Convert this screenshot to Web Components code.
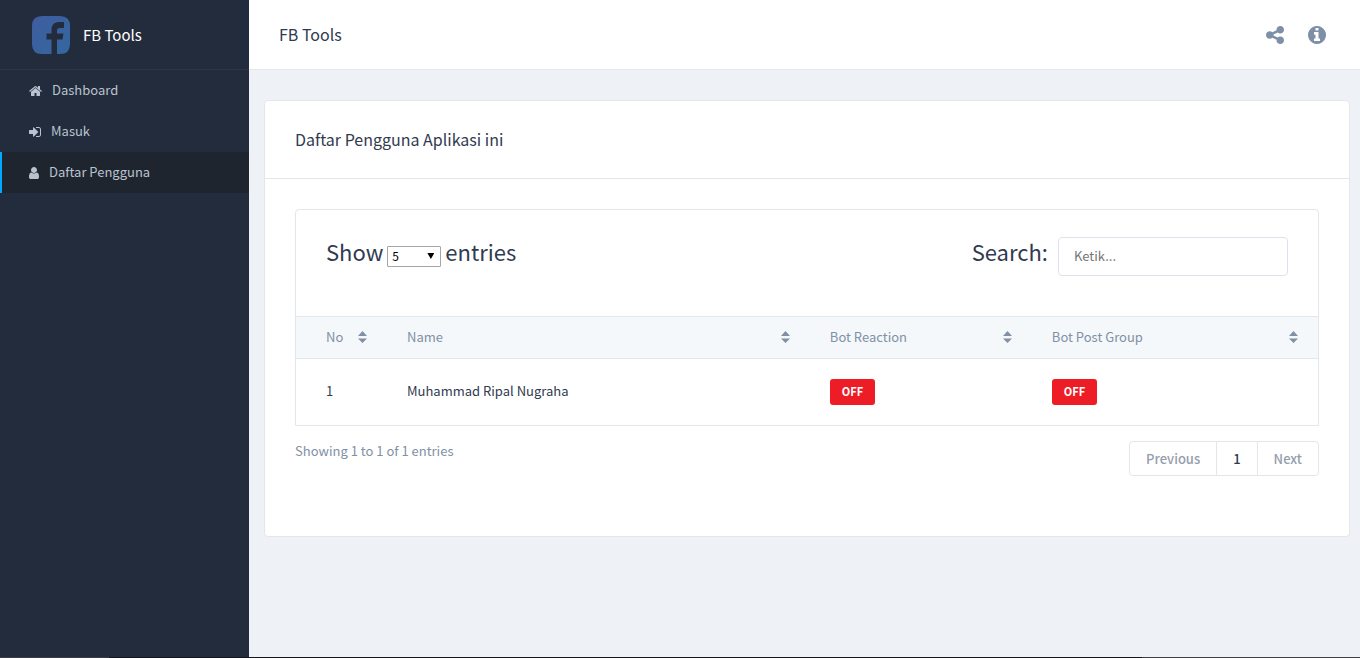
<!DOCTYPE html>
<html lang="id">
<head>
<meta charset="utf-8">
<title>FB Tools</title>
<style>
	html, body {
		height: 100%;
		margin: 0;
	}
	body {
		--line: #e2e7eb;
		--ink: #313a50;
		--muted: #8190a5;
		background: #eef2f6;
		color: var(--ink);
		font-family: "Noto Sans CJK JP", "Noto Sans", sans-serif;
		font-size: 13px;
		line-height: 20px;
	}
</style>
</head>
<body>

<app-shell>
	<side-nav slot="side" brand="FB Tools">
		<nav-item icon="home">Dashboard</nav-item>
		<nav-item icon="signin">Masuk</nav-item>
		<nav-item icon="user" active>Daftar Pengguna</nav-item>
	</side-nav>
	<top-bar slot="top">FB Tools</top-bar>
	<panel-card>
		<span slot="title">Daftar Pengguna Aplikasi ini</span>
		<user-table></user-table>
		<table-footer></table-footer>
	</panel-card>
</app-shell>

<script>
// Icon shapes: [viewBox, width, height, path]
const ICONS = {
	home: ["64 0 1664 1792", 13, 14, "M1472 992v480q0 26-19 45t-45 19h-384v-384h-256v384h-384q-26 0-45-19t-19-45v-480q0-1 .5-3t.5-3l575-474 575 474q1 2 1 6zm223-69l-62 74q-8 9-21 11h-3q-13 0-21-7l-692-577-692 577q-12 8-24 7-13-2-21-11l-62-74q-8-10-7-23.5t11-21.5l719-599q32-26 76-26t76 26l244 204v-195q0-14 9-23t23-9h192q14 0 23 9t9 23v408l219 182q10 8 11 21.5t-7 23.5z"],
	signin: ["128 0 1536 1792", 12, 14, "M1312 896q0 26-19 45l-544 544q-19 19-45 19t-45-19-19-45v-288h-448q-26 0-45-19t-19-45v-384q0-26 19-45t45-19h448v-288q0-26 19-45t45-19 45 19l544 544q19 19 19 45zm352-352v704q0 119-84.5 203.5t-203.5 84.5h-320q-13 0-22.5-9.5t-9.5-22.5q0-4-1-20t-.5-26.5 3-23.5 10-19.5 20.5-6.5h320q66 0 113-47t47-113v-704q0-66-47-113t-113-47h-312l-11.5-1-11.5-3-8-5.5-7-9-2-13.5q0-4-1-20t-.5-26.5 3-23.5 10-19.5 20.5-6.5h320q119 0 203.5 84.5t84.5 203.5z"],
	user: ["256 0 1280 1792", 10, 14, "M1536 1399q0 109-62.5 187t-150.5 78h-854q-88 0-150.5-78t-62.5-187q0-85 8.5-160.5t31.5-152 58.5-131 94-89 134.5-34.5q131 128 313 128t313-128q76 0 134.5 34.5t94 89 58.5 131 31.5 152 8.5 160.5zm-256-887q0 159-112.5 271.5t-271.5 112.5-271.5-112.5-112.5-271.5 112.5-271.5 271.5-112.5 271.5 112.5 112.5 271.5z"],
	share: ["128 128 1536 1536", 18, 18, "M1344 1024q133 0 226.5 93.5t93.5 226.5-93.5 226.5-226.5 93.5-226.5-93.5-93.5-226.5q0-12 2-34l-360-180q-92 86-218 86-133 0-226.5-93.5t-93.5-226.5 93.5-226.5 226.5-93.5q126 0 218 86l360-180q-2-22-2-34 0-133 93.5-226.5t226.5-93.5 226.5 93.5 93.5 226.5-93.5 226.5-226.5 93.5q-126 0-218-86l-360 180q2 22 2 34t-2 34l360 180q92-86 218-86z"],
	info: ["128 128 1536 1536", 18, 18, "M1152 1376v-160q0-14-9-23t-23-9h-96v-512q0-14-9-23t-23-9h-320q-14 0-23 9t-9 23v160q0 14 9 23t23 9h96v320h-96q-14 0-23 9t-9 23v160q0 14 9 23t23 9h448q14 0 23-9t9-23zm-128-896v-160q0-14-9-23t-23-9h-192q-14 0-23 9t-9 23v160q0 14 9 23t23 9h192q14 0 23-9t9-23zm640 416q0 209-103 385.5t-279.5 279.5-385.5 103-385.5-103-279.5-279.5-103-385.5 103-385.5 279.5-279.5 385.5-103 385.5 103 279.5 279.5 103 385.5z"],
	sort: ["0 0 9 12", 9, 12, "M0 5L4.5 0L9 5zM0 7.5h9L4.5 12z"]
};

function icon(name) {
	const [box, w, h, d] = ICONS[name];
	return `<svg viewBox="${box}" width="${w}" height="${h}" fill="currentColor" aria-hidden="true"><path d="${d}"/></svg>`;
}

// Page frame: sidebar, header, content and the thin strip at the bottom
class AppShell extends HTMLElement {
	constructor() {
		super();
		this.attachShadow({ mode: "open" }).innerHTML = `
			<style>
				:host {
					display: grid;
					grid-template-columns: 249px 1fr;
					grid-template-rows: auto 1fr 1px;
					min-height: 100vh;
				}
				slot[name="side"] { display: block; grid-row: 1 / 3; background: #232c3c; }
				main { padding: 30px 10px 30px 15px; }
				.strip {
					grid-column: 1 / 3;
					background: linear-gradient(90deg, #3c3b42 8%, #15151b 8%, #15151b 84%, #3f3e43 84%);
				}
			</style>
			<slot name="side"></slot>
			<slot name="top"></slot>
			<main><slot></slot></main>
			<div class="strip"></div>`;
	}
}
customElements.define("app-shell", AppShell);

class SideNav extends HTMLElement {
	constructor() {
		super();
		this.attachShadow({ mode: "open" }).innerHTML = `
			<style>
				:host { display: block; color: #b9c3cf; }
				.brand {
					display: flex;
					align-items: center;
					gap: 13px;
					box-sizing: border-box;
					height: 70px;
					padding-left: 32px;
					border-bottom: 1px solid #2d3648;
					color: #fff;
					font-size: 15px;
					text-decoration: none;
				}
			</style>
			<a class="brand" href="#">
				<svg viewBox="0 0 38 38" width="38" height="38" aria-hidden="true">
					<defs>
						<linearGradient id="blue" x1="0" y1="0" x2="1" y2="1">
							<stop offset="0" stop-color="#3f5ca0"/>
							<stop offset="1" stop-color="#33689e"/>
						</linearGradient>
					</defs>
					<path fill="url(#blue)" d="M10 0H28Q38 0 38 10V28Q38 38 28 38H25V23.500H30.500L31.500 17.500H25V14.500Q25 12 28 12H32V6H27Q19.500 6 19.500 14V17.500H14.500V23.500H19.500V38H10Q0 38 0 28V10Q0 0 10 0Z"/>
				</svg>
				<span></span>
			</a>
			<nav><slot></slot></nav>`;
	}
	connectedCallback() {
		this.shadowRoot.querySelector("span").textContent = this.getAttribute("brand");
	}
}
customElements.define("side-nav", SideNav);

class NavItem extends HTMLElement {
	connectedCallback() {
		this.attachShadow({ mode: "open" }).innerHTML = `
			<style>
				:host { display: block; }
				a {
					display: flex;
					align-items: center;
					gap: 10px;
					box-sizing: border-box;
					height: 41px;
					padding-left: 27px;
					border-left: 2px solid transparent;
					color: inherit;
					text-decoration: none;
				}
				span { padding-bottom: 2px; }
				:host([active]) a { background: #1f252f; border-color: #00a8ff; }
			</style>
			<a href="#">${icon(this.getAttribute("icon"))}<span><slot></slot></span></a>`;
	}
}
customElements.define("nav-item", NavItem);

class TopBar extends HTMLElement {
	constructor() {
		super();
		this.attachShadow({ mode: "open" }).innerHTML = `
			<style>
				:host {
					display: flex;
					align-items: center;
					gap: 24px;
					box-sizing: border-box;
					height: 70px;
					padding: 0 34px 0 30px;
					background: #fff;
					border-bottom: 1px solid var(--line);
				}
				h1 { flex: 1; margin: 0; padding-bottom: 2px; font-size: 16px; font-weight: 400; }
				button {
					display: flex;
					padding: 0;
					border: 0;
					background: none;
					color: #7d90a8;
				}
			</style>
			<h1><slot></slot></h1>
			<button type="button" aria-label="Share">${icon("share")}</button>
			<button type="button" aria-label="Info">${icon("info")}</button>`;
	}
}
customElements.define("top-bar", TopBar);

class PanelCard extends HTMLElement {
	constructor() {
		super();
		this.attachShadow({ mode: "open" }).innerHTML = `
			<style>
				:host {
					display: block;
					background: #fff;
					border: 1px solid var(--line);
					border-radius: 4px;
				}
				h2 {
					margin: 0;
					padding: 28px 30px 29px;
					border-bottom: 1px solid var(--line);
					font-size: 16px;
					font-weight: 400;
				}
				.body { padding: 30px 30px 60px; }
			</style>
			<h2><slot name="title"></slot></h2>
			<div class="body"><slot></slot></div>`;
	}
}
customElements.define("panel-card", PanelCard);

class UserTable extends HTMLElement {
	constructor() {
		super();
		const heads = ["No", "Name", "Bot Reaction", "Bot Post Group"];
		this.attachShadow({ mode: "open" }).innerHTML = `
			<style>
				:host {
					display: block;
					border: 1px solid var(--line);
					border-radius: 4px 4px 0 0;
				}
				.tools {
					display: flex;
					justify-content: space-between;
					padding: 27px 30px 40px;
					font-size: 22px;
					line-height: 28px;
				}
				.length, .search { display: flex; }
				.length { gap: 4px; }
				.search { gap: 10px; }
				.pick { position: relative; align-self: end; height: 21px; margin-bottom: 9px; }
				.pick::after {
					content: "";
					position: absolute;
					top: 7px;
					right: 7px;
					width: 7px;
					height: 6px;
					background: #000;
					clip-path: polygon(0 0, 100% 0, 50% 100%);
					pointer-events: none;
				}
				select {
					display: block;
					appearance: none;
					box-sizing: border-box;
					width: 54px;
					height: 21px;
					margin: 0;
					padding: 0 4px 2px;
					border: 1px solid #a6a6a6;
					border-radius: 1px;
					background: #fff;
					color: #000;
					font-family: inherit;
					font-size: 12px;
				}
				input {
					box-sizing: border-box;
					width: 230px;
					height: 39px;
					margin: 0;
					padding: 0 15px 2px;
					border: 1px solid #dfe2ea;
					border-radius: 4px;
					background: #fff;
					font-family: inherit;
					font-size: 13px;
				}
				input::placeholder { color: #757575; }
				table { width: 100%; border-collapse: collapse; table-layout: fixed; }
				col:nth-child(1) { width: 91px; }
				col:nth-child(3) { width: 222px; }
				col:nth-child(4) { width: 28%; }
				th, td { padding: 0 20px; text-align: left; font-weight: 400; }
				th:first-child, td:first-child { padding-left: 30px; }
				th {
					height: 41px;
					border-top: 1px solid var(--line);
					border-bottom: 1px solid var(--line);
					background: #f4f8fb;
					color: var(--muted);
				}
				th div { display: flex; align-items: center; justify-content: space-between; margin-bottom: 2px; }
				td { height: 66px; }
				td span { display: block; margin-bottom: 2px; }
				td button {
					display: block;
					height: 26px;
					padding: 0 12px 2px;
					border: 0;
					border-radius: 3px;
					background: #ee1c25;
					color: #fff;
					font-family: inherit;
					font-size: 11px;
					font-weight: 700;
				}
			</style>
			<div class="tools">
				<div class="length">
					<label for="length">Show</label>
					<span class="pick">
						<select id="length"><option>5</option><option>10</option><option>25</option></select>
					</span>
					<span>entries</span>
				</div>
				<div class="search">
					<label for="search">Search:</label>
					<input id="search" type="search" placeholder="Ketik...">
				</div>
			</div>
			<table>
				<colgroup><col><col><col><col></colgroup>
				<thead>
					<tr>${heads.map(h => `<th><div>${h}${icon("sort")}</div></th>`).join("")}</tr>
				</thead>
				<tbody>
					<tr>
						<td><span>1</span></td>
						<td><span>Muhammad Ripal Nugraha</span></td>
						<td><button type="button">OFF</button></td>
						<td><button type="button">OFF</button></td>
					</tr>
				</tbody>
			</table>`;
	}
}
customElements.define("user-table", UserTable);

class TableFooter extends HTMLElement {
	constructor() {
		super();
		this.attachShadow({ mode: "open" }).innerHTML = `
			<style>
				:host {
					display: flex;
					justify-content: space-between;
					align-items: flex-start;
					padding-top: 15px;
					color: var(--muted);
				}
				.pages {
					display: flex;
					border: 1px solid var(--line);
					border-radius: 4px;
				}
				button {
					height: 33px;
					padding: 0 16px;
					border: 0;
					background: none;
					color: #959eac;
					font-family: inherit;
					font-size: 13px;
					font-weight: 500;
				}
				button + button { border-left: 1px solid var(--line); }
				button.current { color: var(--ink); }
			</style>
			<span>Showing 1 to 1 of 1 entries</span>
			<div class="pages">
				<button type="button">Previous</button>
				<button type="button" class="current">1</button>
				<button type="button">Next</button>
			</div>`;
	}
}
customElements.define("table-footer", TableFooter);
</script>
</body>
</html>
